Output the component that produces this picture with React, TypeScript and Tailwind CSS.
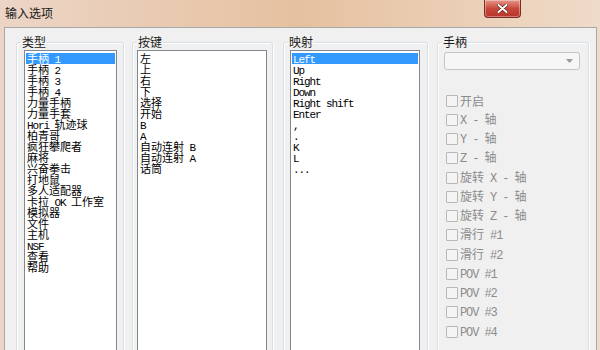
import React from "react";

const cats = ["手柄 1","手柄 2","手柄 3","手柄 4","力量手柄","力量手套","Hori 轨迹球","柏青哥","疯狂攀爬者","麻将","兴奋拳击","打地鼠","多人适配器","卡拉 OK 工作室","模拟器","文件","主机","NSF","查看","帮助"];
const keys = ["左","上","右","下","选择","开始","B","A","自动连射 B","自动连射 A","话筒"];
const maps = ["Left","Up","Right","Down","Right shift","Enter",",",".","K","L","..."];
const checks = ["开启","X - 轴","Y - 轴","Z - 轴","旋转 X - 轴","旋转 Y - 轴","旋转 Z - 轴","滑行 #1","滑行 #2","POV #1","POV #2","POV #3","POV #4"];

function Mixed({ t }: { t: string }) {
  const parts = t.split(/([\x20-\x7e]+)/).filter((p) => p.length > 0);
  return (
    <>
      {parts.map((p, i) =>
        /^[\x20-\x7e]+$/.test(p) ? (
          <span key={i} className="font-mono tracking-[-1.1px] whitespace-pre">
            {p}
          </span>
        ) : (
          <span key={i}>{p}</span>
        )
      )}
    </>
  );
}

function ListBox({ items, width, ml, selected }: { items: string[]; width: string; ml: string; selected: boolean }) {
  return (
    <div className={`${width} ${ml} mt-[1px] h-[330px] border border-[#828790] bg-white px-[1px] pt-[2px]`}>
      {items.map((it, i) => (
        <div
          key={i}
          className={`h-[11px] leading-[11px] text-[11px] pl-[1px] whitespace-nowrap ${
            selected && i === 0 ? "bg-[#3399ff] text-white" : "text-black"
          }`}
        >
          <Mixed t={it} />
        </div>
      ))}
    </div>
  );
}

export default function App() {
  return (
    <div className="w-[600px] h-[350px] overflow-hidden flex flex-col bg-gradient-to-r from-[#ecd5c6] via-[#e6c19f] to-[#efdbc9] font-['Noto_Sans_CJK_SC',sans-serif]">
      <div className="h-[27px] shrink-0 flex items-start">
        <span className="mt-[5px] ml-[5px] text-[12px] leading-[16px] text-[#1a1a1a]">输入选项</span>
        <div className="ml-auto mr-[79px] w-[37px] h-[18px] rounded-b-[4px] border border-t-0 border-[#7e2a22] bg-gradient-to-b from-[#e4968a] via-[#c9483b] to-[#b5362a] flex items-center justify-center shadow-[inset_0_0_0_1px_rgba(255,255,255,0.35)]">
          <svg width="11" height="9" viewBox="0 0 11 9">
            <path d="M1.5 1 L9.5 8 M9.5 1 L1.5 8" stroke="#5a1a14" strokeWidth="3.2" strokeLinecap="round" />
            <path d="M1.5 1 L9.5 8 M9.5 1 L1.5 8" stroke="#ffffff" strokeWidth="2" strokeLinecap="round" />
          </svg>
        </div>
      </div>
      <div className="ml-[4px] mr-[3px] flex-1 border border-[#a8a8a8] bg-[#f0f0f0] flex items-start pl-[11px] pt-[7px]">
        <fieldset className="w-[108px] shrink-0 h-[400px] border border-[#d5dfe5] rounded-[3px] shadow-[inset_1px_1px_0_#ffffff,1px_1px_0_#ffffff]">
          <legend className="ml-[4px] px-[1px] text-[12px] leading-[14px] text-[#1a1a1a]">类型</legend>
          <ListBox items={cats} width="w-[93px]" ml="ml-[7px]" selected />
        </fieldset>
        <fieldset className="ml-[8px] w-[141px] shrink-0 h-[400px] border border-[#d5dfe5] rounded-[3px] shadow-[inset_1px_1px_0_#ffffff,1px_1px_0_#ffffff]">
          <legend className="ml-[4px] px-[1px] text-[12px] leading-[14px] text-[#1a1a1a]">按键</legend>
          <ListBox items={keys} width="w-[130px]" ml="ml-[4px]" selected={false} />
        </fieldset>
        <fieldset className="ml-[10px] w-[145px] shrink-0 h-[400px] border border-[#d5dfe5] rounded-[3px] shadow-[inset_1px_1px_0_#ffffff,1px_1px_0_#ffffff]">
          <legend className="ml-[4px] px-[1px] text-[12px] leading-[14px] text-[#1a1a1a]">映射</legend>
          <ListBox items={maps} width="w-[130px]" ml="ml-[6px]" selected />
        </fieldset>
        <fieldset className="ml-[9px] w-[152px] shrink-0 h-[400px] border border-[#d5dfe5] rounded-[3px] shadow-[inset_1px_1px_0_#ffffff,1px_1px_0_#ffffff]">
          <legend className="ml-[4px] px-[1px] text-[12px] leading-[14px] text-[#1a1a1a]">手柄</legend>
          <div className="ml-[6px] mt-[3px] w-[136px] h-[18px] rounded-[3px] border border-[#c5c5c5] bg-[#f6f6f6] flex items-center justify-end pr-[6px]">
            <svg width="7" height="4" viewBox="0 0 7 4">
              <path d="M0 0 L7 0 L3.5 4 Z" fill="#9a9a9a" />
            </svg>
          </div>
          <div className="mt-[21px] ml-[8px] flex flex-col">
            {checks.map((c, i) => (
              <div key={i} className="h-[19.25px] flex items-center">
                <div className="w-[12px] h-[12px] border border-[#b8b8b8] bg-[#f4f4f4] rounded-[1px] shrink-0" />
                <span className="ml-[2px] text-[12px] leading-[12px] text-[#8c8c8c] whitespace-nowrap">
                  <Mixed t={c} />
                </span>
              </div>
            ))}
          </div>
        </fieldset>
      </div>
    </div>
  );
}
